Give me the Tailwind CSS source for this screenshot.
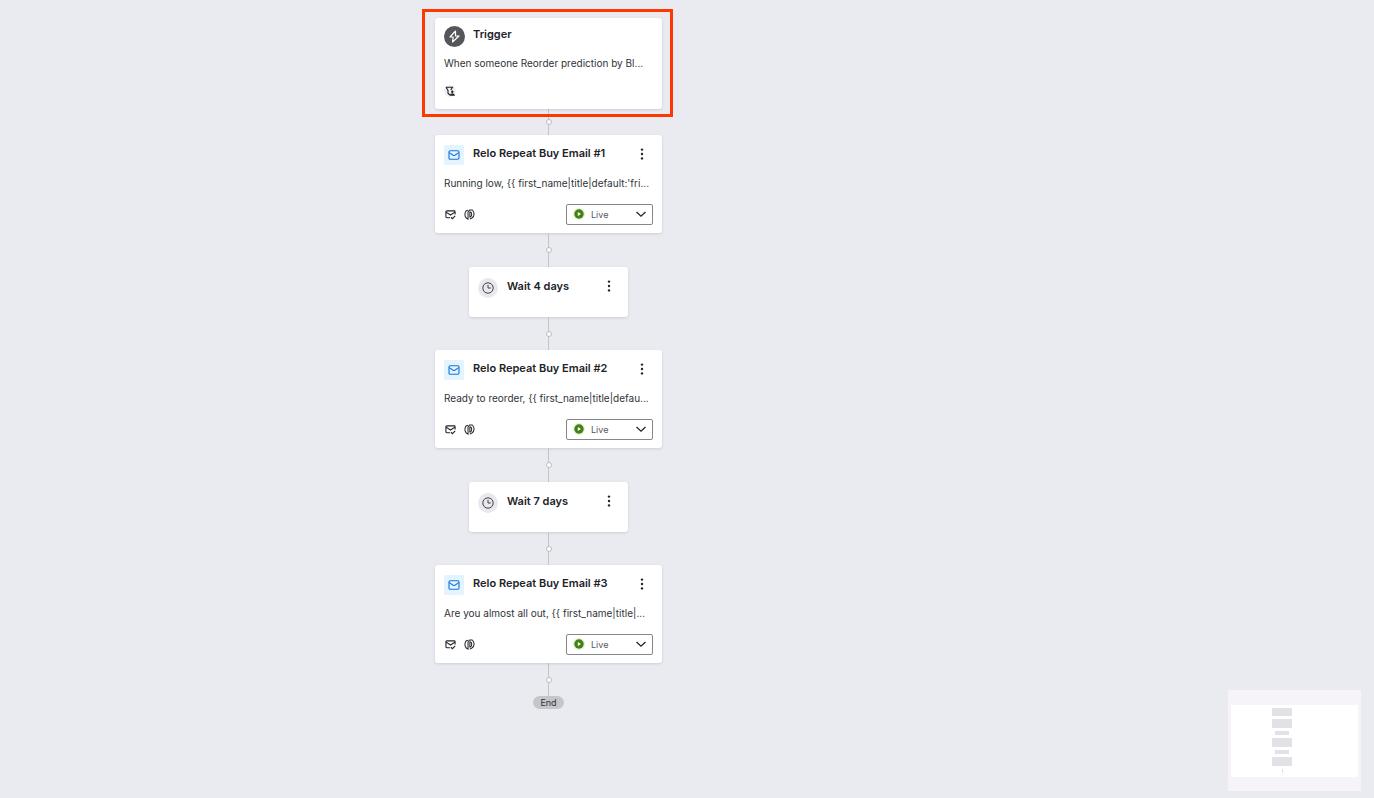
<!DOCTYPE html>
<html lang="en">
  <head>
    <meta charset="UTF-8" />
    <meta name="viewport" content="width=device-width, initial-scale=1.0" />
    <title>Flow</title>
    <script src="https://cdn.jsdelivr.net/npm/@tailwindcss/browser@4"></script>
  </head>

  <body class="min-h-screen bg-[#eaebf0] text-[10px] leading-4 text-[#303338] font-['Inter',sans-serif]">
    <!-- Shared icons -->
    <svg class="hidden">
      <symbol id="mail" viewBox="0 0 12 12" fill="none" stroke="currentColor" stroke-width="1.1">
        <rect x="1" y="1.8" width="10" height="8.4" rx="1.2" />
        <path d="M1.2 3.6 5.2 6.3q.8.5 1.6 0L10.8 3.6" />
      </symbol>
      <symbol id="mail-check" viewBox="0 0 12 12" fill="none" stroke="currentColor" stroke-width="1.2">
        <path d="M5.5 9.5H2q-1 0-1-1V3q0-1 1-1h8q1 0 1 1v3M1.2 3.4 6 6.6l4.8-3.2M6.5 9l1.6 1.6 3-3" />
      </symbol>
      <symbol id="tracking" viewBox="0 0 12 12" fill="none" stroke="currentColor" stroke-width="1.1">
        <path d="M4.4 1.2 2.2 2.2Q1 4 1 6t1.200 3.600L4.400 11V3.200L6.200 1h2.600Q11 2.600 11 5.500T8.600 9.800L6.400 11" />
        <path d="M6.400 3.200h.8q1.200.6 1.200 2.600T7.200 8.600h-.8z" />
      </symbol>
      <symbol id="clock" viewBox="0 0 12 12" fill="none" stroke="currentColor">
        <circle cx="6" cy="6" r="5.2" />
        <path d="M6 2.800V6h2.800" />
      </symbol>
      <symbol id="dots" viewBox="0 0 4 12" fill="currentColor">
        <circle cx="2" cy="1.600" r="1.200" />
        <circle cx="2" cy="6" r="1.200" />
        <circle cx="2" cy="10.400" r="1.200" />
      </symbol>
      <symbol id="live" viewBox="0 0 12 12">
        <circle cx="6" cy="6" r="6" fill="#e3f2cf" />
        <circle cx="6" cy="6" r="4.700" fill="#458015" />
        <path d="M4.800 3.900v4.200L8 6z" fill="#fff" />
      </symbol>
      <symbol id="chevron" viewBox="0 0 12 12" fill="none" stroke="currentColor" stroke-width="1.300">
        <path d="m1.500 4 4.500 4.200L10.500 4" />
      </symbol>
    </svg>

    <main class="flex flex-col items-center pt-[18px] pr-[277px]">
      <!-- Trigger -->
      <section class="relative h-[91px] w-[227px] rounded-[3px] bg-white px-[9px] pt-2 shadow-[0_1px_3px_rgba(0,0,0,0.12)]">
        <div class="absolute -top-[9px] -right-[11px] -bottom-2 -left-[13px] border-3 border-[#ff3700]"></div>
        <header class="flex gap-2">
          <svg class="size-[21px]" viewBox="0 0 21 21" fill="none">
            <circle cx="10.500" cy="10.500" r="10.500" fill="#55565a" />
            <path d="M11.500 5 6 11h3.200l-.7 5L15 10h-3.500z" stroke="#fff" stroke-width="1.200" stroke-linejoin="round" />
          </svg>
          <h2 class="text-[11px] leading-4 font-semibold text-[#202328]">Trigger</h2>
        </header>
        <p class="mt-2 whitespace-nowrap">When someone Reorder prediction by Bl...</p>
        <div class="mt-[14px] flex size-3 items-center justify-center rounded-full bg-[#f0f0f3]">
          <svg class="size-[10px]" viewBox="0 0 10 10" fill="none" stroke="#202328" stroke-width="1.100">
            <path d="M1 1.200h6.500L5.800 4M1 1.200l2 3.200v2.800L4.800 9" />
            <path d="M7.300 4.500a1.200 1.200 0 1 1 0 2.400 1.200 1.200 0 0 1 0-2.400zM4.600 9.700q.3-2.500 2.700-2.500t2.700 2.500z" fill="#202328" stroke="none" />
          </svg>
        </div>
      </section>

      <div class="flex h-[26px] w-px items-center justify-center bg-[#c3c4c8]">
        <span class="size-[6px] shrink-0 rounded-full border border-[#bbbcc0] bg-white"></span>
      </div>

      <!-- Email 1 -->
      <section class="h-[98px] w-[227px] rounded-[3px] bg-white px-[9px] pt-[10px] shadow-[0_1px_3px_rgba(0,0,0,0.12)]">
        <header class="flex gap-[9px]">
          <span class="flex size-5 items-center justify-center rounded-xs bg-[#e3f4ff] text-[#1673d6]"><svg class="size-3"><use href="#mail" /></svg></span>
          <h2 class="grow text-[11px] leading-4 font-semibold text-[#202328]">Relo Repeat Buy Email #1</h2>
          <button class="mr-[9px] h-[18px] text-[#202328]" aria-label="Email 1 options"><svg class="h-3 w-1"><use href="#dots" /></svg></button>
        </header>
        <p class="mt-[10px] whitespace-nowrap">Running low, {{ first_name|title|default:'fri...</p>
        <footer class="mt-[13px] flex items-center gap-2 pl-px text-[#202328]">
          <svg class="size-[11px]"><use href="#mail-check" /></svg>
          <svg class="size-[11px]"><use href="#tracking" /></svg>
          <div class="relative ml-auto h-[21px] w-[87px]">
            <select class="size-full appearance-none rounded-xs border border-[#85868a] pl-6 text-[9px] text-[#55565a]" aria-label="Email 1 status"><option>Live</option></select>
            <svg class="pointer-events-none absolute top-1 left-[7px] size-3"><use href="#live" /></svg>
            <svg class="pointer-events-none absolute top-1 right-[6px] size-3"><use href="#chevron" /></svg>
          </div>
        </footer>
      </section>

      <div class="flex h-[34px] w-px items-center justify-center bg-[#c3c4c8]">
        <span class="size-[6px] shrink-0 rounded-full border border-[#bbbcc0] bg-white"></span>
      </div>

      <!-- Wait 4 days -->
      <section class="h-[50px] w-[159px] rounded-[3px] bg-white px-[9px] pt-[11px] shadow-[0_1px_3px_rgba(0,0,0,0.12)]">
        <header class="flex gap-[9px]">
          <span class="flex size-5 items-center justify-center rounded-full bg-[#e9e8ec] text-[#404348]"><svg class="size-3"><use href="#clock" /></svg></span>
          <h2 class="grow text-[11px] leading-4 font-semibold text-[#202328]">Wait 4 days</h2>
          <button class="mr-2 h-4 text-[#202328]" aria-label="Wait 4 days options"><svg class="h-3 w-1"><use href="#dots" /></svg></button>
        </header>
      </section>

      <div class="flex h-[33px] w-px items-center justify-center bg-[#c3c4c8]">
        <span class="size-[6px] shrink-0 rounded-full border border-[#bbbcc0] bg-white"></span>
      </div>

      <!-- Email 2 -->
      <section class="h-[98px] w-[227px] rounded-[3px] bg-white px-[9px] pt-[10px] shadow-[0_1px_3px_rgba(0,0,0,0.12)]">
        <header class="flex gap-[9px]">
          <span class="flex size-5 items-center justify-center rounded-xs bg-[#e3f4ff] text-[#1673d6]"><svg class="size-3"><use href="#mail" /></svg></span>
          <h2 class="grow text-[11px] leading-4 font-semibold text-[#202328]">Relo Repeat Buy Email #2</h2>
          <button class="mr-[9px] h-[18px] text-[#202328]" aria-label="Email 2 options"><svg class="h-3 w-1"><use href="#dots" /></svg></button>
        </header>
        <p class="mt-[10px] whitespace-nowrap">Ready to reorder, {{ first_name|title|defau...</p>
        <footer class="mt-[13px] flex items-center gap-2 pl-px text-[#202328]">
          <svg class="size-[11px]"><use href="#mail-check" /></svg>
          <svg class="size-[11px]"><use href="#tracking" /></svg>
          <div class="relative ml-auto h-[21px] w-[87px]">
            <select class="size-full appearance-none rounded-xs border border-[#85868a] pl-6 text-[9px] text-[#55565a]" aria-label="Email 2 status"><option>Live</option></select>
            <svg class="pointer-events-none absolute top-1 left-[7px] size-3"><use href="#live" /></svg>
            <svg class="pointer-events-none absolute top-1 right-[6px] size-3"><use href="#chevron" /></svg>
          </div>
        </footer>
      </section>

      <div class="flex h-[34px] w-px items-center justify-center bg-[#c3c4c8]">
        <span class="size-[6px] shrink-0 rounded-full border border-[#bbbcc0] bg-white"></span>
      </div>

      <!-- Wait 7 days -->
      <section class="h-[50px] w-[159px] rounded-[3px] bg-white px-[9px] pt-[11px] shadow-[0_1px_3px_rgba(0,0,0,0.12)]">
        <header class="flex gap-[9px]">
          <span class="flex size-5 items-center justify-center rounded-full bg-[#e9e8ec] text-[#404348]"><svg class="size-3"><use href="#clock" /></svg></span>
          <h2 class="grow text-[11px] leading-4 font-semibold text-[#202328]">Wait 7 days</h2>
          <button class="mr-2 h-4 text-[#202328]" aria-label="Wait 7 days options"><svg class="h-3 w-1"><use href="#dots" /></svg></button>
        </header>
      </section>

      <div class="flex h-[33px] w-px items-center justify-center bg-[#c3c4c8]">
        <span class="size-[6px] shrink-0 rounded-full border border-[#bbbcc0] bg-white"></span>
      </div>

      <!-- Email 3 -->
      <section class="h-[98px] w-[227px] rounded-[3px] bg-white px-[9px] pt-[10px] shadow-[0_1px_3px_rgba(0,0,0,0.12)]">
        <header class="flex gap-[9px]">
          <span class="flex size-5 items-center justify-center rounded-xs bg-[#e3f4ff] text-[#1673d6]"><svg class="size-3"><use href="#mail" /></svg></span>
          <h2 class="grow text-[11px] leading-4 font-semibold text-[#202328]">Relo Repeat Buy Email #3</h2>
          <button class="mr-[9px] h-[18px] text-[#202328]" aria-label="Email 3 options"><svg class="h-3 w-1"><use href="#dots" /></svg></button>
        </header>
        <p class="mt-[10px] whitespace-nowrap">Are you almost all out, {{ first_name|title|...</p>
        <footer class="mt-[13px] flex items-center gap-2 pl-px text-[#202328]">
          <svg class="size-[11px]"><use href="#mail-check" /></svg>
          <svg class="size-[11px]"><use href="#tracking" /></svg>
          <div class="relative ml-auto h-[21px] w-[87px]">
            <select class="size-full appearance-none rounded-xs border border-[#85868a] pl-6 text-[9px] text-[#55565a]" aria-label="Email 3 status"><option>Live</option></select>
            <svg class="pointer-events-none absolute top-1 left-[7px] size-3"><use href="#live" /></svg>
            <svg class="pointer-events-none absolute top-1 right-[6px] size-3"><use href="#chevron" /></svg>
          </div>
        </footer>
      </section>

      <div class="flex h-[33px] w-px items-center justify-center bg-[#c3c4c8]">
        <span class="size-[6px] shrink-0 rounded-full border border-[#bbbcc0] bg-white"></span>
      </div>
      <div class="rounded-full bg-[#c5c6ca] px-[7px] text-[9px] leading-[13px]">End</div>
    </main>

    <!-- Minimap -->
    <aside class="fixed right-[13px] bottom-[7px] w-[133px] bg-[#f6f4f8] px-[3px] pt-[15px] pb-[14px]">
      <div class="flex h-[72px] flex-col items-center gap-[3px] bg-white pt-[3px] pr-[25px]">
        <span class="h-2 w-5 bg-[#e2e1e5]"></span>
        <span class="h-[9px] w-5 bg-[#e2e1e5]"></span>
        <span class="h-1 w-[14px] bg-[#e2e1e5]"></span>
        <span class="h-[9px] w-5 bg-[#e2e1e5]"></span>
        <span class="h-1 w-[14px] bg-[#e2e1e5]"></span>
        <span class="h-[9px] w-5 bg-[#e2e1e5]"></span>
        <span class="h-1 w-px bg-[#e2e1e5]"></span>
      </div>
    </aside>
  </body>
</html>
